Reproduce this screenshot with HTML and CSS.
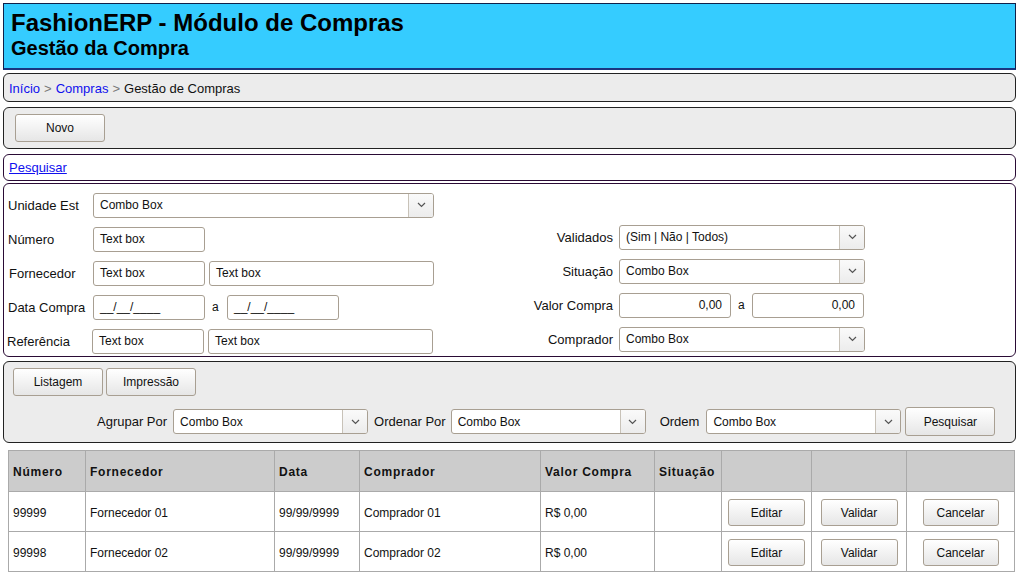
FILE: index.html
```html
<!DOCTYPE html>
<html lang="pt">
<head>
<meta charset="utf-8">
<title>FashionERP - Módulo de Compras</title>
<link rel="stylesheet" href="styles.css">
</head>
<body>
<div class="page">
  <header class="header">
    <h1 class="title">FashionERP - Módulo de Compras</h1>
    <h2 class="subtitle">Gestão da Compra</h2>
  </header>

  <nav class="panel crumbs">
    <a href="#">Início</a><span class="sep">&gt;</span><a href="#">Compras</a><span class="sep">&gt;</span><span>Gestão de Compras</span>
  </nav>

  <div class="panel toolbar">
    <button class="btn btn-novo">Novo</button>
  </div>

  <div class="panel white link-bar">
    <a href="#" class="ulink">Pesquisar</a>
  </div>

  <div class="panel white form">
    <div class="form-left">
      <div class="frow">
        <span class="lbl">Unidade Est</span>
        <div class="combo w-wide"><span class="ctext">Combo Box</span><span class="carrow"><svg width="9" height="6" viewBox="0 0 9 6"><path d="M1 1 L4.5 4.5 L8 1" fill="none" stroke="#555" stroke-width="1.2"/></svg></span></div>
      </div>
      <div class="frow">
        <span class="lbl">Número</span>
        <div class="tbox w-short">Text box</div>
      </div>
      <div class="frow">
        <span class="lbl lbl-in">Fornecedor</span>
        <div class="tbox w-short">Text box</div>
        <div class="tbox w-long">Text box</div>
      </div>
      <div class="frow">
        <span class="lbl">Data Compra</span>
        <div class="tbox w-short">__/__/____</div>
        <span class="a-sep">a</span>
        <div class="tbox w-short">__/__/____</div>
      </div>
      <div class="frow">
        <span class="lbl lbl-out">Referência</span>
        <div class="tbox w-short">Text box</div>
        <div class="tbox w-long">Text box</div>
      </div>
    </div>
    <div class="form-right">
      <div class="frow">
        <span class="rlbl">Validados</span>
        <div class="combo w-right"><span class="ctext">(Sim | Não | Todos)</span><span class="carrow"><svg width="9" height="6" viewBox="0 0 9 6"><path d="M1 1 L4.5 4.5 L8 1" fill="none" stroke="#555" stroke-width="1.2"/></svg></span></div>
      </div>
      <div class="frow">
        <span class="rlbl">Situação</span>
        <div class="combo w-right"><span class="ctext">Combo Box</span><span class="carrow"><svg width="9" height="6" viewBox="0 0 9 6"><path d="M1 1 L4.5 4.5 L8 1" fill="none" stroke="#555" stroke-width="1.2"/></svg></span></div>
      </div>
      <div class="frow">
        <span class="rlbl">Valor Compra</span>
        <div class="tbox w-short num">0,00</div>
        <span class="a-sep a-right">a</span>
        <div class="tbox w-short num">0,00</div>
      </div>
      <div class="frow">
        <span class="rlbl">Comprador</span>
        <div class="combo w-right"><span class="ctext">Combo Box</span><span class="carrow"><svg width="9" height="6" viewBox="0 0 9 6"><path d="M1 1 L4.5 4.5 L8 1" fill="none" stroke="#555" stroke-width="1.2"/></svg></span></div>
      </div>
    </div>
  </div>

  <div class="panel listing">
    <div class="list-btns">
      <button class="btn btn-list">Listagem</button>
      <button class="btn btn-list">Impressão</button>
    </div>
    <div class="list-opts">
      <span class="olbl">Agrupar Por</span>
      <div class="combo w-opt"><span class="ctext">Combo Box</span><span class="carrow"><svg width="9" height="6" viewBox="0 0 9 6"><path d="M1 1 L4.5 4.5 L8 1" fill="none" stroke="#555" stroke-width="1.2"/></svg></span></div>
      <span class="olbl olbl-ordenar">Ordenar Por</span>
      <div class="combo w-opt"><span class="ctext">Combo Box</span><span class="carrow"><svg width="9" height="6" viewBox="0 0 9 6"><path d="M1 1 L4.5 4.5 L8 1" fill="none" stroke="#555" stroke-width="1.2"/></svg></span></div>
      <span class="olbl olbl-ordem">Ordem</span>
      <div class="combo w-opt"><span class="ctext">Combo Box</span><span class="carrow"><svg width="9" height="6" viewBox="0 0 9 6"><path d="M1 1 L4.5 4.5 L8 1" fill="none" stroke="#555" stroke-width="1.2"/></svg></span></div>
      <button class="btn btn-search">Pesquisar</button>
    </div>
  </div>

  <table class="grid">
    <colgroup>
      <col class="c1"><col class="c2"><col class="c3"><col class="c4"><col class="c5"><col class="c6"><col class="c7"><col class="c8"><col class="c9">
    </colgroup>
    <thead>
      <tr><th>Número</th><th>Fornecedor</th><th>Data</th><th>Comprador</th><th>Valor Compra</th><th>Situação</th><th></th><th></th><th></th></tr>
    </thead>
    <tbody>
      <tr><td>99999</td><td>Fornecedor 01</td><td>99/99/9999</td><td>Comprador 01</td><td>R$ 0,00</td><td></td><td class="act"><button class="btn btn-row">Editar</button></td><td class="act"><button class="btn btn-row">Validar</button></td><td class="act"><button class="btn btn-row btn-cancel">Cancelar</button></td></tr>
      <tr><td>99998</td><td>Fornecedor 02</td><td>99/99/9999</td><td>Comprador 02</td><td>R$ 0,00</td><td></td><td class="act"><button class="btn btn-row">Editar</button></td><td class="act"><button class="btn btn-row">Validar</button></td><td class="act"><button class="btn btn-row btn-cancel">Cancelar</button></td></tr>
    </tbody>
  </table>
</div>
</body>
</html>
```

FILE: styles.css
```css
* { box-sizing: border-box; }
html, body { margin: 0; padding: 0; background: #fff; }
body {
  font-family: "Liberation Sans", Arial, sans-serif;
  font-size: 13px;
  color: #111;
}
.page {
  width: 1019px;
  padding: 3px 3px 0 3px;
  display: flex;
  flex-direction: column;
}
.header {
  height: 67px;
  background: #35ccff;
  border: 1px solid #10204a;
  border-bottom: 2px solid #1a3580;
  padding: 5px 0 0 7px;
}
.title {
  margin: 0;
  font-size: 24px;
  line-height: 28px;
  font-weight: bold;
  color: #000;
}
.subtitle {
  margin: 0;
  font-size: 20px;
  line-height: 22px;
  font-weight: bold;
  color: #000;
}
.panel {
  border: 1px solid #222;
  border-radius: 6px;
  background: #ececec;
}
.panel.white {
  background: #fff;
  border-color: #2a0b35;
}
.crumbs {
  margin-top: 3px;
  height: 29px;
  display: flex;
  align-items: center;
  padding: 1px 0 0 5px;
  font-size: 13px;
}
.crumbs a { color: #1010ee; text-decoration: none; }
.crumbs .sep { color: #777; margin: 0 4px; }
.toolbar {
  margin-top: 5px;
  height: 42px;
  padding: 6px 0 0 11px;
}
.link-bar {
  margin-top: 5px;
  height: 27px;
  padding: 5px 0 0 5px;
}
.ulink { color: #1010ee; text-decoration: underline; font-size: 13px; }
.btn {
  font-family: "Liberation Sans", Arial, sans-serif;
  font-size: 12px;
  color: #111;
  background: linear-gradient(#ffffff, #e6e6e6);
  border: 1px solid #a89f92;
  border-radius: 3px;
  padding: 0;
  height: 28px;
}
.btn-novo { width: 90px; }

.form {
  margin-top: 2px;
  height: 174px;
  display: flex;
  padding: 4px 0 0 4px;
}
.form-left { width: 520px; display: flex; flex-direction: column; }
.form-right { width: 440px; display: flex; flex-direction: column; padding-top: 32px; }
.frow { display: flex; align-items: center; height: 34px; flex: none; }
.lbl { width: 85px; flex: none; }
.lbl-in { padding-left: 1px; }
.lbl-out { margin-left: -1px; }
.rlbl { width: 91px; text-align: right; padding-right: 6px; flex: none; }
.combo {
  display: flex;
  height: 25px;
  border: 1px solid #a89f92;
  border-radius: 3px;
  background: #fff;
  overflow: hidden;
  flex: none;
}
.ctext { flex: 1; padding-left: 6px; display: flex; align-items: center; font-size: 12px; }
.carrow {
  width: 25px;
  flex: none;
  border-left: 1px solid #c8c2b8;
  background: linear-gradient(#fafafa, #ececec);
  display: flex;
  align-items: center;
  justify-content: center;
}
.w-wide { width: 341px; }
.w-right { width: 246px; }
.w-opt { width: 195px; }
.tbox {
  height: 25px;
  border: 1px solid #a89f92;
  border-radius: 3px;
  background: #fff;
  padding-left: 6px;
  display: flex;
  align-items: center;
  font-size: 12px;
  margin-right: 4px;
  flex: none;
}
.tbox.num { justify-content: flex-end; padding-right: 8px; }
.w-short { width: 112px; }
.w-long { width: 225px; }
.a-sep { width: 18px; padding-left: 3px; flex: none; font-size: 12px; }
.a-sep.a-right { width: 17px; padding-left: 3px; }

.listing {
  margin-top: 4px;
  height: 82px;
  padding: 6px 0 0 9px;
}
.list-btns { display: flex; gap: 3px; }
.btn-list { width: 90px; }
.list-opts {
  display: flex;
  align-items: center;
  margin-top: 11px;
  padding-left: 84px;
}
.olbl { padding-right: 6px; flex: none; }
.olbl-ordenar { padding-left: 6px; padding-right: 5px; }
.olbl-ordem { padding-left: 14px; padding-right: 7px; }
.btn-search { width: 90px; margin-left: 4px; height: 29px; }

.grid {
  margin: 7px 0 0 5px;
  width: 1007px;
  border-collapse: collapse;
  table-layout: fixed;
  font-size: 12px;
}
.grid th, .grid td {
  border: 1px solid #aaa;
  text-align: left;
  padding: 0 0 0 4px;
  color: #111;
}
.grid th {
  background: #cccccc;
  height: 41px;
  font-weight: bold;
  letter-spacing: 0.75px;
  padding-top: 2px;
}
.grid td { height: 40px; padding-top: 2px; }
.c1 { width: 77px; }
.c2 { width: 189px; }
.c3 { width: 85px; }
.c4 { width: 181px; }
.c5 { width: 114px; }
.c6 { width: 67px; }
.c7 { width: 90px; }
.c8 { width: 95px; }
.c9 { width: 108px; }
.grid td.act { text-align: center; padding: 2px 0 0 0; }
.btn-row { width: 77px; height: 27px; }
.btn-cancel { width: 76px; }
```
